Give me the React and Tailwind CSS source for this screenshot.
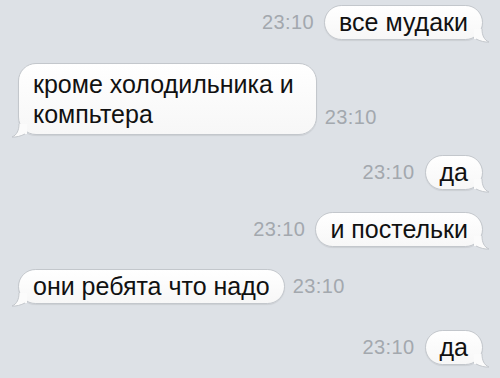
import React from 'react';

const Tail = ({ side }) => (
  <svg
    width="16"
    height="14"
    viewBox="0 0 16 14"
    className={
      side === 'right'
        ? 'absolute right-[-8px] bottom-[-4px]'
        : 'absolute left-[-8px] bottom-[-4px] -scale-x-100'
    }
  >
    <path d="M0 0 L8 0 C8 6 10 11 15 13 C11 13.5 6 12 2 10 L0 10 Z" fill="#fbfbfb" />
    <path d="M8 0 C8 6 10 11 15 13 C11 13.5 6 12 2 10" fill="none" stroke="#c3c7cc" strokeWidth="1" />
  </svg>
);

const Time = () => (
  <span className="mb-[8px] text-[20px] leading-none text-[#a3a8ae] tracking-[0.4px]">23:10</span>
);

const Bubble = ({ side, multi, children }) => (
  <div
    className={
      'relative bg-gradient-to-b from-white to-[#f7f7f7] border border-[#c3c7cc] rounded-[18px] pl-[14px] text-[25px] text-[#111] shadow-[0_1px_1px_rgba(0,0,0,0.08)] ' +
      (multi ? 'pr-[22px] py-[5px] leading-[30px]' : 'pr-[14px] py-[4px] leading-[25px]')
    }
  >
    {children}
    <Tail side={side} />
  </div>
);

const Row = ({ side, multi, text, className = '' }) =>
  side === 'right' ? (
    <div className={'flex justify-end items-end gap-[10px] ' + className}>
      <Time />
      <Bubble side="right">{text}</Bubble>
    </div>
  ) : (
    <div className={'flex justify-start items-end gap-[8px] ' + className}>
      <Bubble side="left" multi={multi}>{text}</Bubble>
      <Time />
    </div>
  );

export default function App() {
  return (
    <div className="w-[500px] h-[378px] overflow-hidden bg-[#dde1e6] font-['Liberation_Sans',Arial,sans-serif] flex flex-col gap-[22px] pt-[5px] pl-[18px] pr-[17px]">
      <Row side="right" text="все мудаки" />
      <Row
        side="left"
        multi
        className="mt-[1px]"
        text={
          <>
            кроме холодильника и
            <br />
            компьтера
          </>
        }
      />
      <Row side="right" text="да" className="-mt-[2px]" />
      <Row side="right" text="и постельки" />
      <Row side="left" text="они ребята что надо" />
      <Row side="right" text="да" className="mt-[4px]" />
    </div>
  );
}
